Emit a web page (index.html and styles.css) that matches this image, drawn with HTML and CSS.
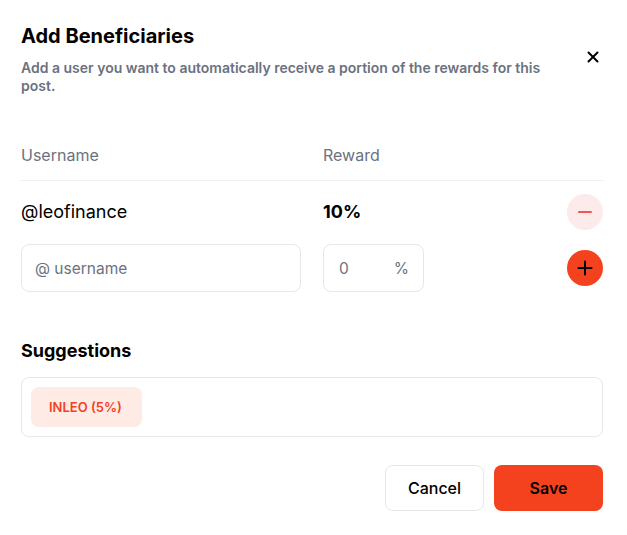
FILE: index.html
```html
<!DOCTYPE html>
<html lang="en">
<head>
<meta charset="utf-8">
<title>Add Beneficiaries</title>
<link rel="stylesheet" href="styles.css">
</head>
<body>
<div class="modal">
  <div class="header">
    <div class="header-text">
      <h1 class="title">Add Beneficiaries</h1>
      <p class="subtitle">Add a user you want to automatically receive a portion of the rewards for this post.</p>
    </div>
    <button class="close" aria-label="Close">
      <svg width="12" height="12" viewBox="0 0 12 12"><path d="M1.5 1.5 L10.5 10.5 M10.5 1.5 L1.5 10.5" stroke="#000" stroke-width="2" stroke-linecap="round"/></svg>
    </button>
  </div>

  <div class="table">
    <div class="row head">
      <span>Username</span>
      <span>Reward</span>
      <span></span>
    </div>
    <div class="row entry">
      <span class="user">@leofinance</span>
      <span class="reward">10%</span>
      <button class="round minus" aria-label="Remove">
        <svg width="14" height="14" viewBox="0 0 14 14"><path d="M1 7 H13" stroke="#f25454" stroke-width="2" stroke-linecap="round"/></svg>
      </button>
    </div>
    <div class="row add">
      <div class="field user-field">@ username</div>
      <div class="field pct-field"><span>0</span><span>%</span></div>
      <button class="round plus" aria-label="Add">
        <svg width="16" height="16" viewBox="0 0 16 16"><path d="M8 1.5 V14.5 M1.5 8 H14.5" stroke="#000" stroke-width="2" stroke-linecap="round"/></svg>
      </button>
    </div>
  </div>

  <h2 class="section-title">Suggestions</h2>
  <div class="suggestions">
    <span class="chip">INLEO (5%)</span>
  </div>

  <div class="actions">
    <button class="btn cancel">Cancel</button>
    <button class="btn save">Save</button>
  </div>
</div>
</body>
</html>
```

FILE: styles.css
```css
* { box-sizing: border-box; }

html, body {
  margin: 0;
  padding: 0;
  background: #ffffff;
}

body {
  font-family: Inter, "Noto Sans", "Liberation Sans", sans-serif;
  color: #000;
}

.modal {
  width: 627px;
  padding: 22px 24px 0 21px;
}

.header {
  display: flex;
  align-items: center;
  gap: 16px;
}

.header-text {
  flex: 1;
}

.title {
  margin: 0 0 9px 0;
  font-size: 20px;
  line-height: 28px;
  font-weight: 700;
}

.subtitle {
  margin: 0;
  font-size: 14px;
  line-height: 18px;
  font-weight: 600;
  color: #6b7280;
}

.close {
  width: 24px;
  height: 24px;
  padding: 0 4px 0 0;
  margin-top: -4px;
  border: 0;
  background: transparent;
  display: flex;
  align-items: center;
  justify-content: flex-end;
}

.table {
  margin-top: 49px;
}

.row {
  display: grid;
  grid-template-columns: 302px 1fr 36px;
  align-items: center;
}

.head {
  font-size: 16px;
  line-height: 22px;
  color: #6b7280;
  padding-bottom: 14px;
  border-bottom: 1px solid #f1f1f2;
}

.entry {
  padding-top: 13px;
  font-size: 18px;
  line-height: 24px;
}

.reward {
  font-weight: 700;
}

.add {
  margin-top: 14px;
}

.round {
  width: 36px;
  height: 36px;
  border-radius: 50%;
  border: 0;
  padding: 0;
  display: flex;
  align-items: center;
  justify-content: center;
}

.minus {
  background: #fdeaea;
}

.plus {
  background: #f4421f;
}

.field {
  height: 48px;
  border: 1px solid #e5e7eb;
  border-radius: 8px;
  display: flex;
  align-items: center;
  font-size: 15.5px;
  color: #6b7280;
}

.user-field {
  width: 280px;
  padding-left: 13px;
}

.pct-field {
  width: 101px;
  padding: 0 14px 0 15px;
  justify-content: space-between;
}

.section-title {
  margin: 47px 0 0 0;
  font-size: 18px;
  line-height: 24px;
  font-weight: 700;
}

.suggestions {
  margin-top: 14px;
  border: 1px solid #e5e7eb;
  border-radius: 8px;
  padding: 9px;
  display: flex;
  gap: 8px;
}

.chip {
  display: inline-flex;
  align-items: center;
  height: 40px;
  padding: 0 20px 0 18px;
  background: #feebe6;
  color: #f4421f;
  border-radius: 8px;
  font-size: 13px;
  font-weight: 600;
}

.actions {
  margin-top: 28px;
  display: flex;
  justify-content: flex-end;
  gap: 10px;
}

.btn {
  height: 46px;
  border-radius: 8px;
  font-family: inherit;
  font-size: 16px;
  font-weight: 600;
  color: #000;
}

.cancel {
  width: 99px;
  background: #fff;
  border: 1px solid #e5e7eb;
  font-weight: 500;
}

.save {
  width: 109px;
  background: #f4421f;
  border: 0;
}
```
